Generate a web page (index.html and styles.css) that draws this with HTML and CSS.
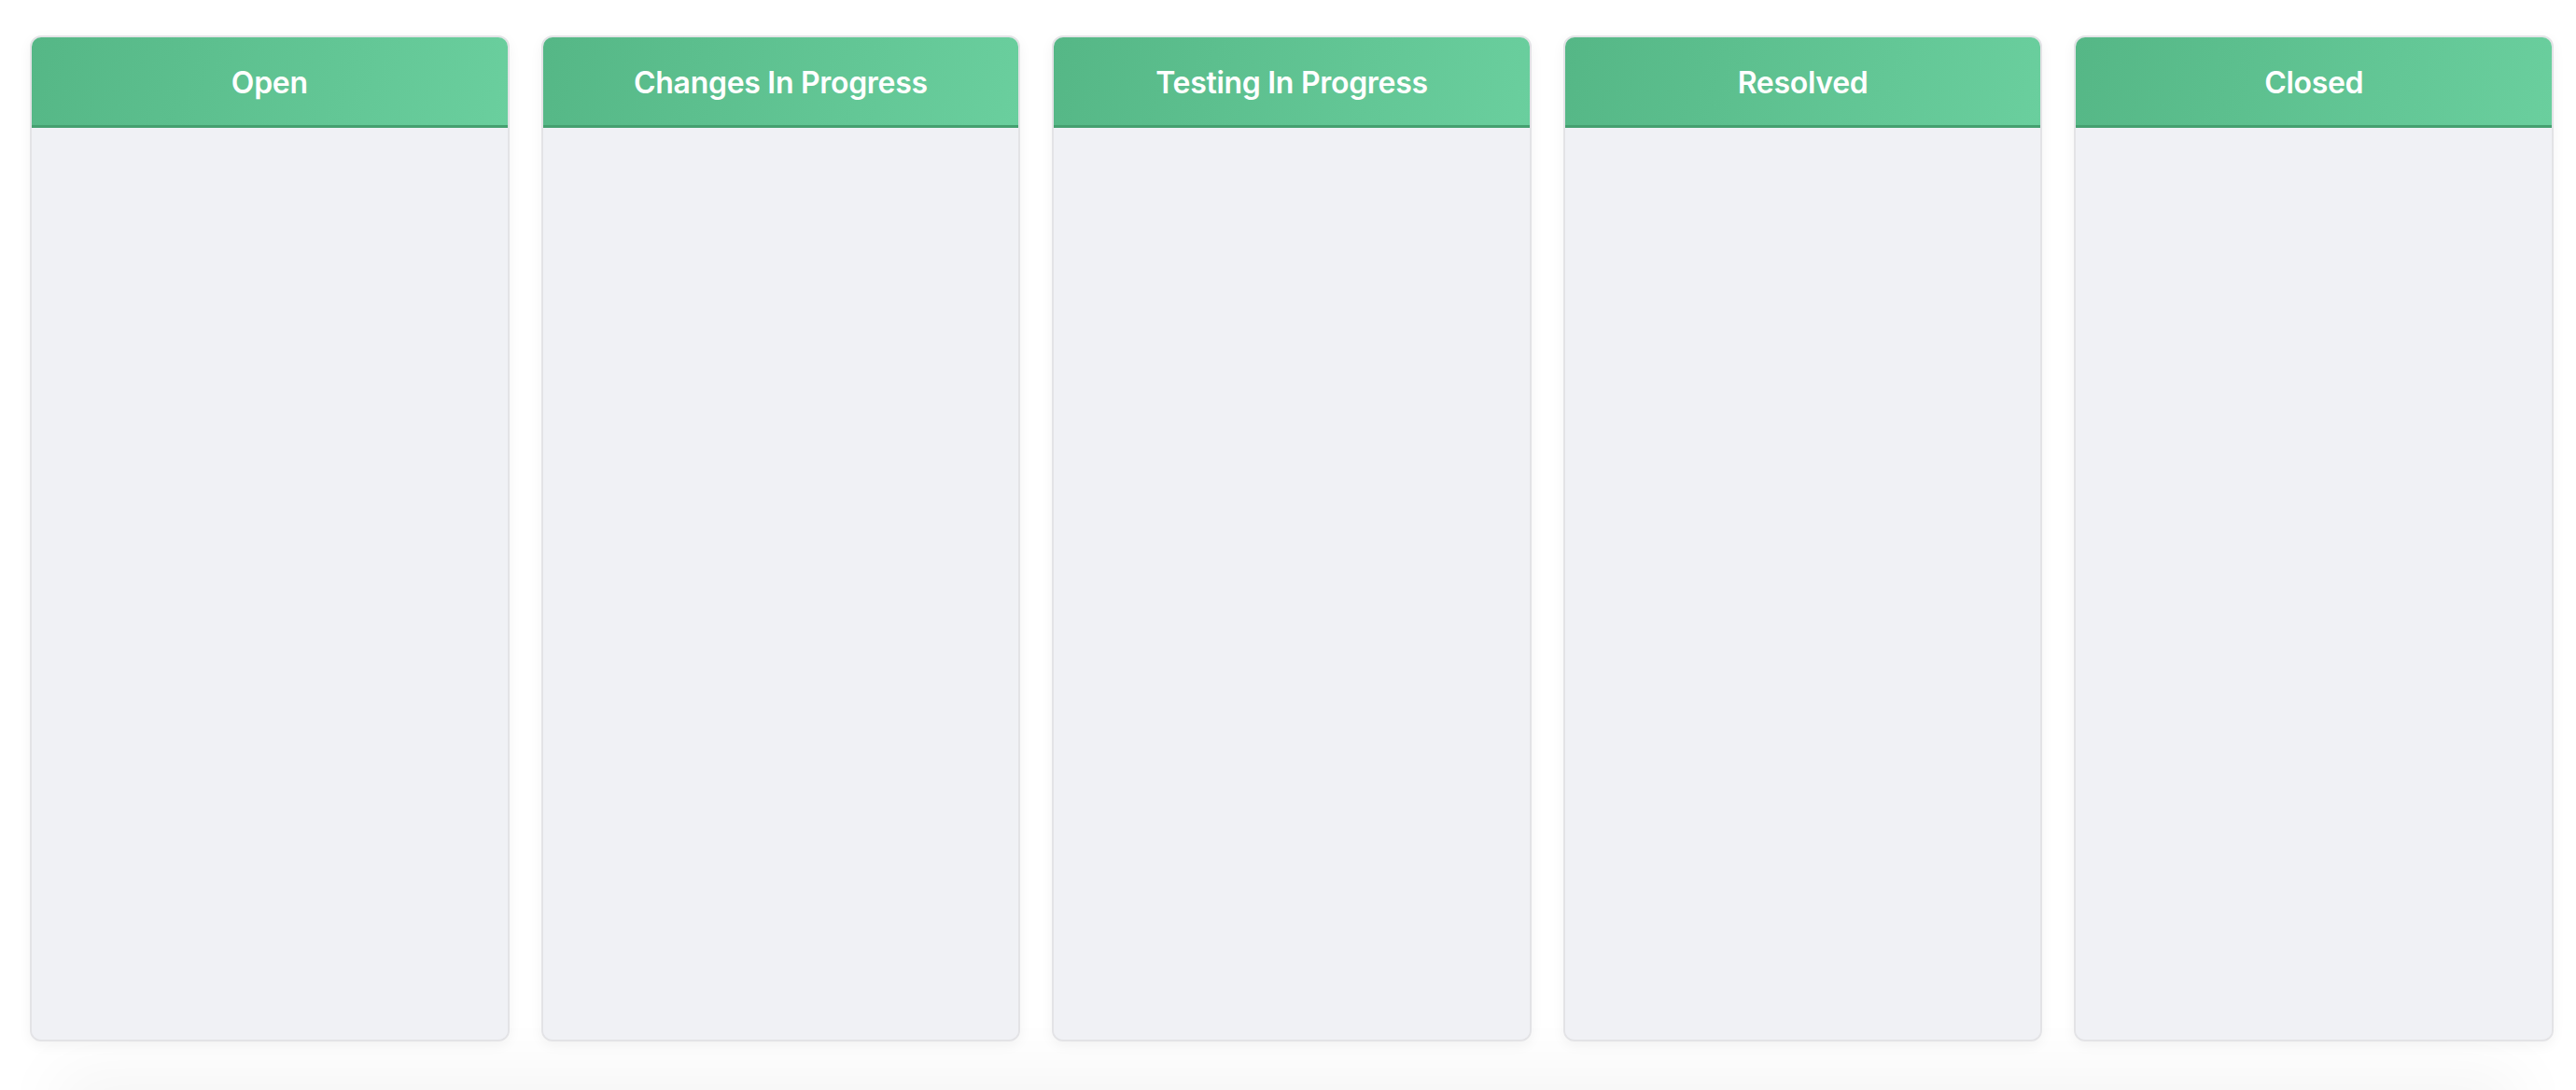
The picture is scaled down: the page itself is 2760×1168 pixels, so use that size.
FILE: index.html
```html
<!DOCTYPE html>
<html lang="en">
<head>
<meta charset="utf-8">
<title>Board</title>
<link rel="stylesheet" href="styles.css">
</head>
<body>
<main class="board">
  <section class="column">
    <header class="column-header">Open</header>
    <div class="column-body"></div>
  </section>
  <section class="column">
    <header class="column-header">Changes In Progress</header>
    <div class="column-body"></div>
  </section>
  <section class="column">
    <header class="column-header">Testing In Progress</header>
    <div class="column-body"></div>
  </section>
  <section class="column">
    <header class="column-header">Resolved</header>
    <div class="column-body"></div>
  </section>
  <section class="column">
    <header class="column-header">Closed</header>
    <div class="column-body"></div>
  </section>
</main>
<footer class="page-footer"></footer>
</body>
</html>
```

FILE: styles.css
```css
html, body {
  margin: 0;
  padding: 0;
  background: #ffffff;
  overflow: hidden;
}

body {
  font-family: Inter, "Noto Sans", "Liberation Sans", sans-serif;
  height: 1168px;
}

.board {
  display: grid;
  grid-template-columns: repeat(5, 1fr);
  gap: 34px;
  padding: 38px 24px 52px 32px;
  height: 1078px;
}

.column {
  display: flex;
  flex-direction: column;
  border: 2px solid #e3e3e6;
  border-radius: 12px;
  overflow: hidden;
  background: #f0f1f5;
  box-shadow: 0 4px 14px rgba(0, 0, 0, 0.05);
}

.column-header {
  height: 97px;
  box-sizing: border-box;
  display: flex;
  align-items: center;
  justify-content: center;
  padding-top: 2px;
  color: #ffffff;
  font-size: 32px;
  font-weight: 600;
  letter-spacing: -0.3px;
  background: linear-gradient(105deg, #55b786 0%, #6acf9e 100%);
  border-bottom: 3px solid #45a070;
}

.column-body {
  flex: 1;
  background: #f0f1f5;
  border-radius: 12px 12px 0 0;
}

.page-footer {
  height: 40px;
  margin: 0 80px;
  background: #ffffff;
  box-shadow: 0 0 70px 20px rgba(0, 0, 0, 0.045);
}
```
